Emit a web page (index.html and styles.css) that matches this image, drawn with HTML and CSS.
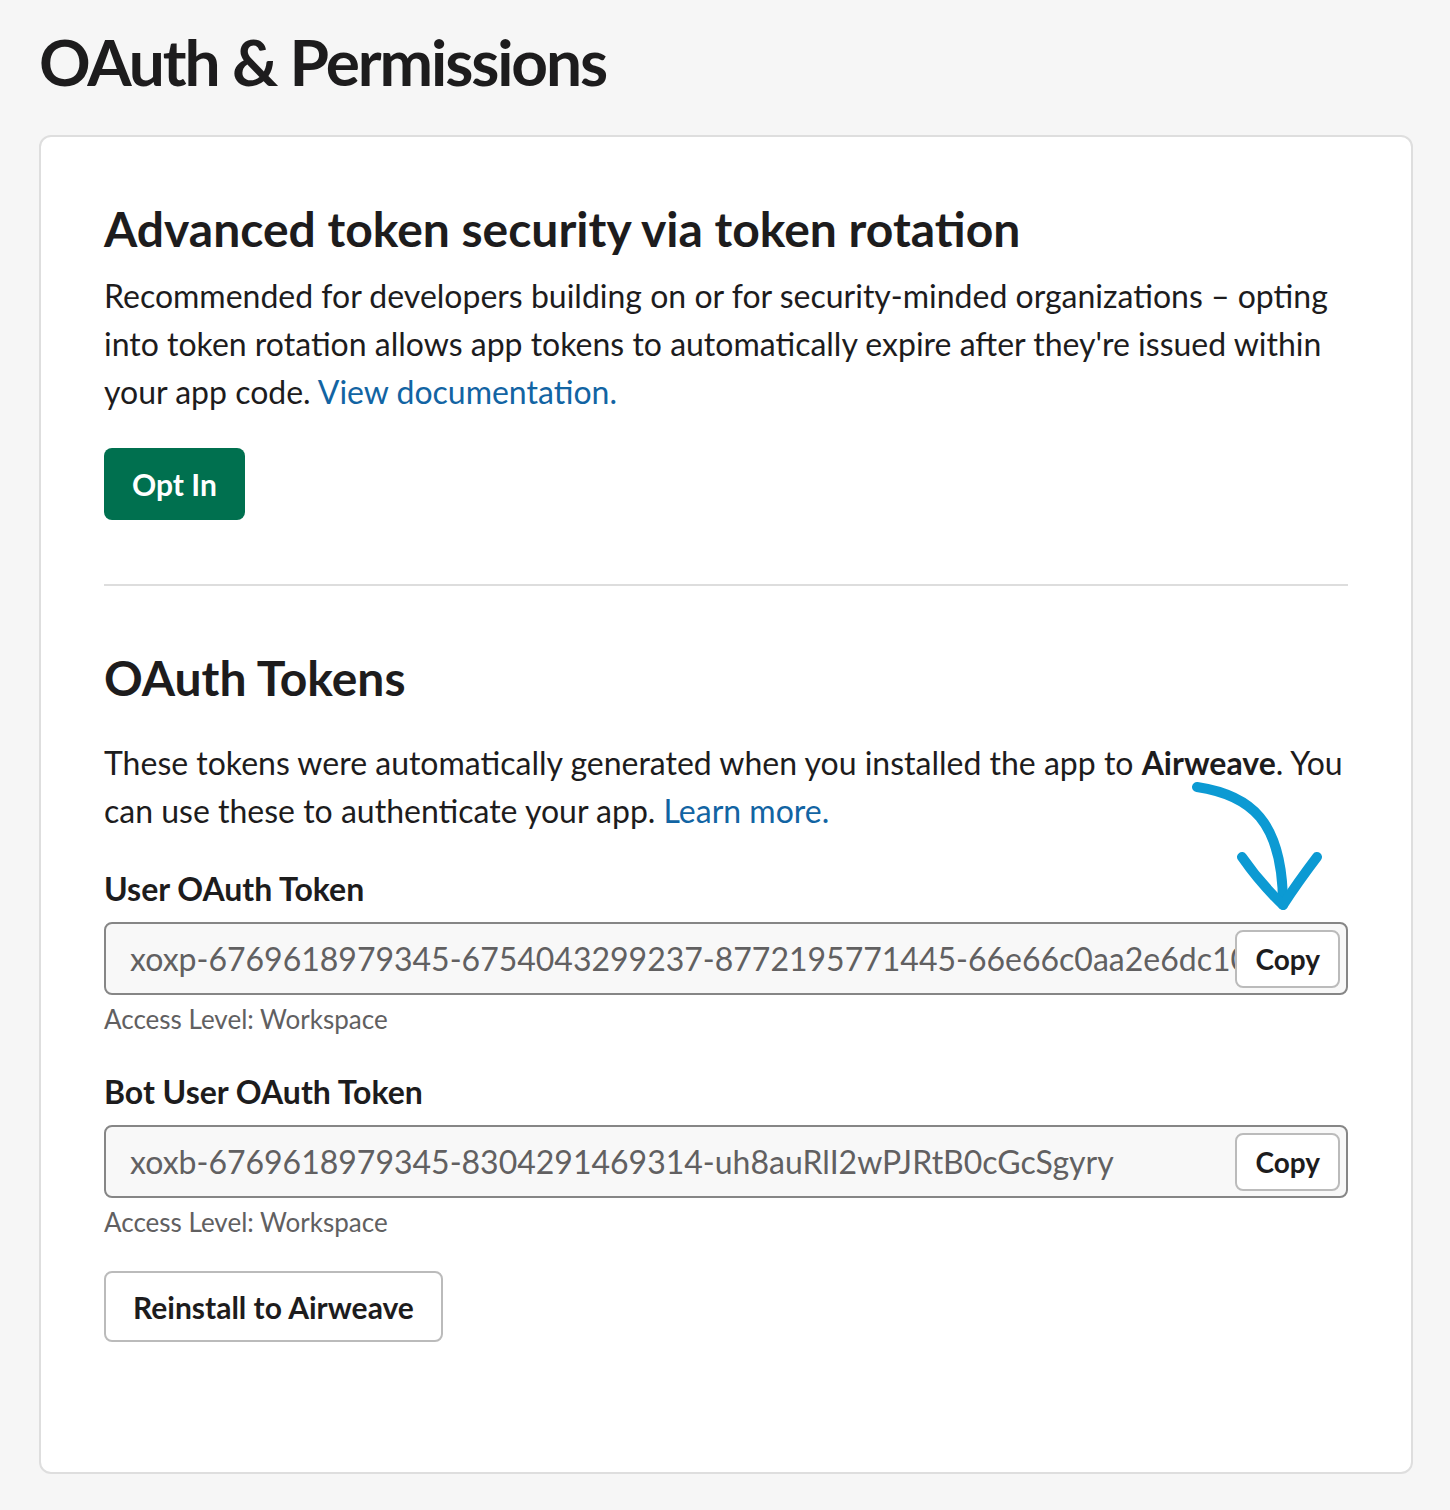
FILE: index.html
```html
<!DOCTYPE html>
<html lang="en">
<head>
<meta charset="utf-8">
<title>OAuth &amp; Permissions</title>
<link rel="stylesheet" href="styles.css">
</head>
<body>
<div class="page">
  <h1 class="page-title">OAuth &amp; Permissions</h1>
  <div class="card">
    <section class="section">
      <h2 class="section-title">Advanced token security via token rotation</h2>
      <p class="section-text">Recommended for developers building on or for security-minded organizations – opting into token rotation allows app tokens to automatically expire after they're issued within your app code. <a class="link" href="#">View documentation.</a></p>
      <button class="btn-primary">Opt In</button>
    </section>
    <hr class="divider">
    <section class="section">
      <h2 class="section-title">OAuth Tokens</h2>
      <p class="section-text intro">These tokens were automatically generated when you installed the app to <strong>Airweave</strong>. You can use these to authenticate your app. <a class="link" href="#">Learn more.</a></p>

      <div class="token-field">
        <div class="token-label">User OAuth Token</div>
        <div class="token-input">
          <span class="token-value">xoxp-6769618979345-6754043299237-8772195771445-66e66c0aa2e6dc10f3b28a1c7d</span>
          <button class="btn-copy">Copy</button>
        </div>
        <div class="token-access">Access Level: Workspace</div>
      </div>

      <div class="token-field">
        <div class="token-label">Bot User OAuth Token</div>
        <div class="token-input">
          <span class="token-value">xoxb-6769618979345-8304291469314-uh8auRlI2wPJRtB0cGcSgyry</span>
          <button class="btn-copy">Copy</button>
        </div>
        <div class="token-access">Access Level: Workspace</div>
      </div>

      <button class="btn-secondary">Reinstall to Airweave</button>
    </section>
  </div>
  <svg class="annotation-arrow" width="160" height="150" viewBox="0 0 160 150" aria-hidden="true">
    <path d="M17 17 C 70 25, 103 50, 103 135" fill="none" stroke="#0c9ad3" stroke-width="10" stroke-linecap="round"/>
    <path d="M62 87 Q 80 113 103 135 Q 118 112 137 87" fill="none" stroke="#0c9ad3" stroke-width="10" stroke-linecap="round" stroke-linejoin="round"/>
  </svg>
</div>
</body>
</html>
```
FILE: styles.css
```css
* { box-sizing: border-box; }

html, body {
  margin: 0;
  padding: 0;
  background: #f6f6f6;
}

body {
  font-family: Lato, "Noto Sans", "Liberation Sans", sans-serif;
  color: #1d1c1d;
}

.page {
  position: relative;
  padding: 23px 37px 38px 39px;
}

.page-title {
  margin: 0 0 35px;
  font-size: 64px;
  line-height: 77px;
  font-weight: 700;
  letter-spacing: -2.1px;
}

.card {
  background: #fff;
  border: 2px solid #dedede;
  border-radius: 12px;
  padding: 63px 63px 130px;
}

.section-title {
  margin: 0;
  font-size: 48px;
  line-height: 58px;
  font-weight: 700;
}

.section-text {
  margin: 14px 0 0;
  font-size: 32px;
  line-height: 48px;
}

.section-text.intro {
  margin-top: 32px;
}

.section-text strong {
  font-weight: 700;
}

.link {
  color: #1264a3;
  text-decoration: none;
}

.btn-primary {
  margin-top: 32px;
  height: 72px;
  padding: 0 28px;
  border: none;
  border-radius: 8px;
  background: #00704f;
  color: #fff;
  font-family: inherit;
  font-size: 30px;
  font-weight: 700;
}

.divider {
  margin: 64px 0 63px;
  border: none;
  border-top: 2px solid #dddddd;
}

.token-field {
  margin-top: 36px;
}

.token-field + .token-field {
  margin-top: 39px;
}

.token-label {
  font-size: 32px;
  line-height: 36px;
  font-weight: 700;
}

.token-input {
  display: flex;
  align-items: center;
  margin-top: 15px;
  height: 73px;
  border: 2px solid #868686;
  border-radius: 8px;
  background: #f8f8f8;
  padding: 0 6px 0 24px;
}

.token-value {
  flex: 1;
  min-width: 0;
  overflow: hidden;
  white-space: nowrap;
  font-size: 32px;
  color: #616061;
}

.btn-copy {
  flex: none;
  height: 58px;
  padding: 0 18px;
  border: 2px solid #bbbbbb;
  border-radius: 8px;
  background: #fff;
  color: #1d1c1d;
  font-family: inherit;
  font-size: 28px;
  font-weight: 700;
}

.token-access {
  margin-top: 8px;
  font-size: 26px;
  line-height: 32px;
  color: #616061;
}

.btn-secondary {
  margin-top: 33px;
  height: 71px;
  padding: 0 27px;
  border: 2px solid #bbbbbb;
  border-radius: 8px;
  background: #fff;
  color: #1d1c1d;
  font-family: inherit;
  font-size: 30px;
  font-weight: 700;
}

.annotation-arrow {
  position: absolute;
  left: 1180px;
  top: 770px;
}
```
